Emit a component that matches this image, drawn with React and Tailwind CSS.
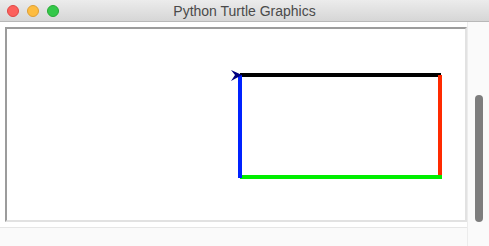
import React from 'react'

// Turtle drawing: coordinates relative to the canvas' inner box
function TurtleCanvas() {
  return (
    <svg width="458" height="191" viewBox="0 0 458 191" className="block">
      <line x1="233" y1="46" x2="434" y2="46" stroke="#000" strokeWidth="4" />
      <line x1="433" y1="46" x2="433" y2="148" stroke="#ff2a00" strokeWidth="4" />
      <line x1="233" y1="148" x2="435" y2="148" stroke="#00ee00" strokeWidth="4" />
      <line x1="233" y1="46" x2="233" y2="149" stroke="#0022ff" strokeWidth="4" />
      <polygon points="224,41 235,46 224,52 228,46" fill="#000080" />
    </svg>
  )
}

export default function App() {
  return (
    <div className="w-[489px] h-[246px] bg-white overflow-hidden flex flex-col" style={{ fontFamily: 'Inter' }}>
      {/* Title bar */}
      <div className="relative h-[22px] flex items-center justify-center bg-gradient-to-b from-[#ececec] to-[#d6d6d6] border-b border-[#b8b8b8]">
        <div className="absolute left-[7px] top-[5px] flex gap-[8px]">
          <span className="w-[12px] h-[12px] rounded-full bg-[#fc605c] border border-[#df4744]" />
          <span className="w-[12px] h-[12px] rounded-full bg-[#fdbc40] border border-[#de9f34]" />
          <span className="w-[12px] h-[12px] rounded-full bg-[#34c84a] border border-[#27aa35]" />
        </div>
        <span className="text-[14px] text-[#4a4a4a] leading-none" style={{ fontFamily: '"Liberation Sans", Arial, sans-serif' }}>
          Python Turtle Graphics
        </span>
      </div>

      {/* Body */}
      <div className="flex flex-1">
        <div className="flex flex-col w-[467px]">
          <div className="pl-[5px] pt-[5px]">
            <div className="w-[462px] h-[195px] border-2 border-t-[#9c9c9c] border-l-[#9c9c9c] border-r-[#e2e2e2] border-b-[#e2e2e2] bg-white">
              <TurtleCanvas />
            </div>
          </div>
          <div className="h-[6px] border-b border-[#e6e6e6]" />
          <div className="flex-1 bg-[#fafafa]" />
        </div>
        {/* Vertical scrollbar */}
        <div className="w-[22px] flex justify-center pt-[73px] pb-[24px] border-l border-[#ececec] bg-[#fafafa]">
          <div className="w-[8px] h-full rounded-full bg-[#7d7d7d]" />
        </div>
      </div>
    </div>
  )
}
